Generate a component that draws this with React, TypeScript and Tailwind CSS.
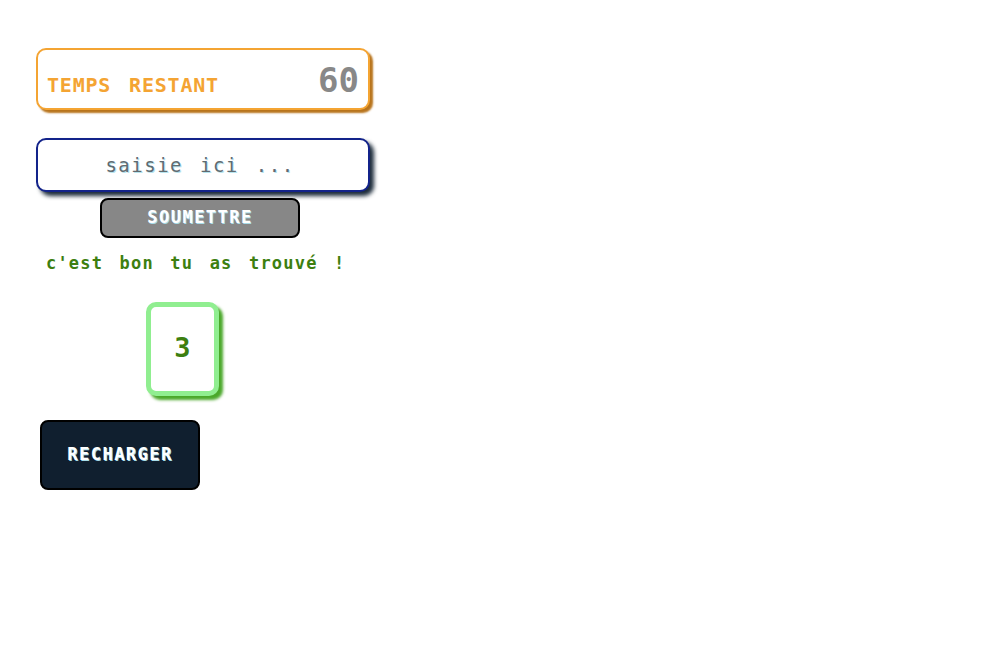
export default function App() {
  const mono = { fontFamily: '"DejaVu Sans Mono", monospace' }
  return (
    <div className="min-h-[660px] w-[1000px] bg-white" style={mono}>
      <div className="flex w-[334px] flex-col pl-[36px] pt-[48px]">
        {/* timer */}
        <div className="flex h-[62px] w-[334px] items-end justify-between rounded-[10px] border-2 border-[#f4a433] bg-white px-[9px] pb-[13px] shadow-[3px_3px_2px_#b8741c]">
          <span className="text-[20px] leading-[20px] font-bold tracking-[0.8px] text-[#f4a433] [word-spacing:5px]">TEMPS RESTANT</span>
          <span className="text-[34px] font-bold leading-[30px] text-[#888888]">60</span>
        </div>

        {/* input */}
        <div className="mt-[28px] flex h-[54px] w-[334px] items-center justify-center rounded-[10px] border-2 border-[#13238a] bg-white pr-[6px] shadow-[4px_4px_4px_#1c2b3a]">
          <span className="text-[19px] tracking-[1.5px] text-[#5f6b70] [text-shadow:1px_1px_0_#b8e4ee] [word-spacing:4px]">saisie ici ...</span>
        </div>

        <button className="ml-[64px] mt-[6px] flex h-[40px] w-[200px] items-center justify-center rounded-[8px] border-2 border-black bg-[#878787] text-[17px] font-bold tracking-[1.5px] text-white [text-shadow:1px_1px_0_#a8dce8]">
          SOUMETTRE
        </button>

        <p className="ml-[10px] mt-[13px] whitespace-nowrap text-[17px] font-bold tracking-[1.2px] text-[#3d7f10] [word-spacing:5px]">c'est bon tu as trouvé !</p>

        <div className="ml-[110px] mt-[25px] flex h-[94px] w-[73px] items-center justify-center rounded-[10px] border-[5px] border-[#90ee90] bg-white shadow-[4px_4px_3px_#4aa82a]">
          <span className="text-[27px] font-bold text-[#3d7f10]">3</span>
        </div>

        <button className="ml-[4px] mt-[24px] flex h-[70px] w-[160px] items-center justify-center rounded-[8px] border-2 border-black bg-[#101f2f] text-[17px] font-bold tracking-[1.5px] text-white [text-shadow:1px_1px_0_#a8dce8]">
          RECHARGER
        </button>
      </div>
    </div>
  )
}
